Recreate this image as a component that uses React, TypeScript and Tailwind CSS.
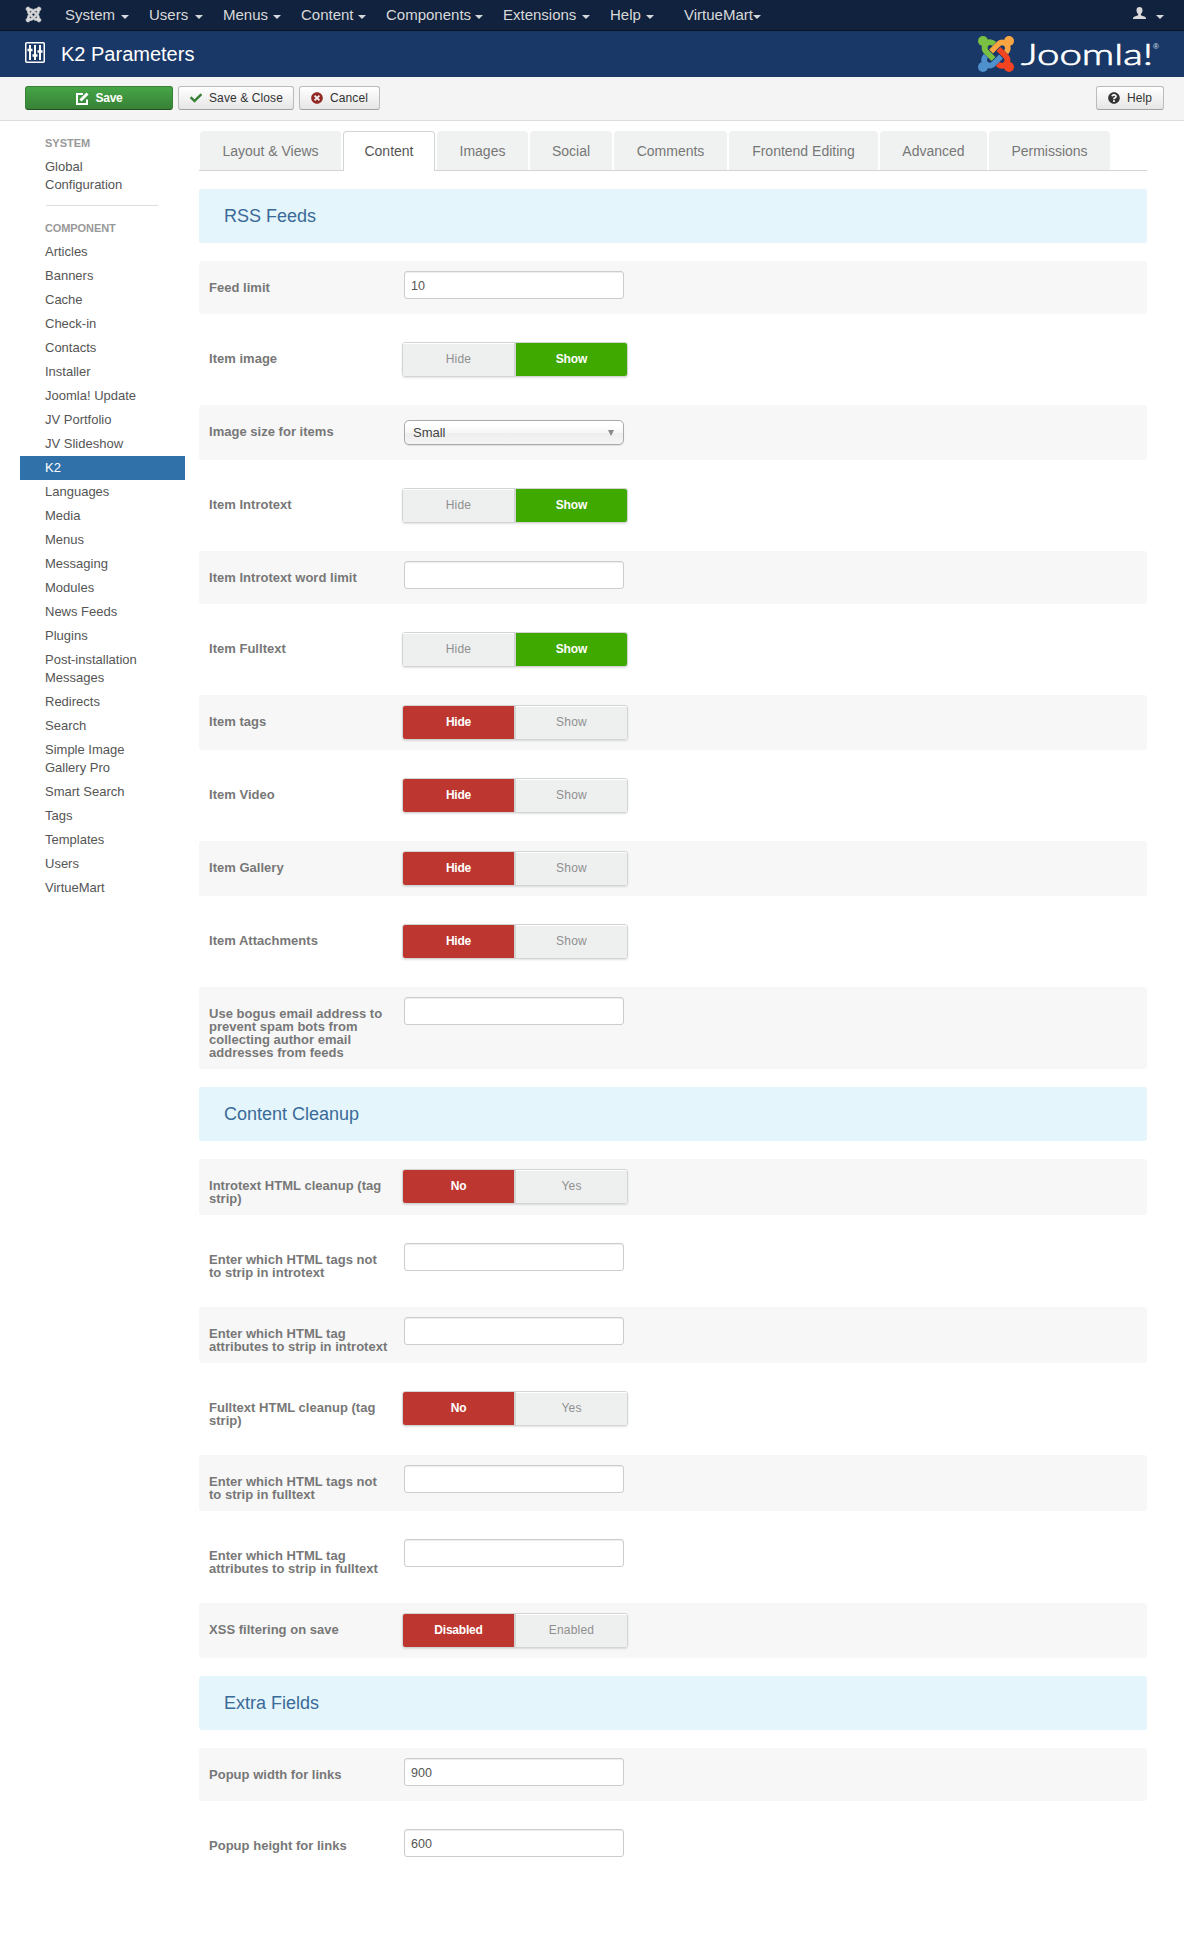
import React from "react";
import { FaJoomla, FaCheck, FaTimesCircle, FaQuestionCircle } from "react-icons/fa";

const navItems: [string, string][] = [
  ["System", "w-16"],
  ["Users", "w-[54px]"],
  ["Menus", "w-[58px]"],
  ["Content", "w-[65px]"],
  ["Components", "w-[97px]"],
  ["Extensions", "w-[87px]"],
  ["Help", "w-[44px]"],
  ["VirtueMart", "w-[77px] ml-[10px]"],
];

const components = [
  "Articles", "Banners", "Cache", "Check-in", "Contacts", "Installer", "Joomla! Update",
  "JV Portfolio", "JV Slideshow", "K2", "Languages", "Media", "Menus", "Messaging", "Modules",
  "News Feeds", "Plugins", "Post-installation Messages", "Redirects", "Search",
  "Simple Image Gallery Pro", "Smart Search", "Tags", "Templates", "Users", "VirtueMart",
];

const tabs: [string, string][] = [
  ["Layout & Views", "w-[141px]"],
  ["Content", "w-[92px]"],
  ["Images", "w-[91px]"],
  ["Social", "w-[82px]"],
  ["Comments", "w-[113px]"],
  ["Frontend Editing", "w-[149px]"],
  ["Advanced", "w-[107px]"],
  ["Permissions", "w-[121px]"],
];

type Field = {
  label: string;
  kind: "text" | "select" | "toggle";
  value?: string;
  options?: [string, string];
  on?: boolean;
};

const hideShow = (label: string, on: boolean): Field => ({ label, kind: "toggle", options: ["Hide", "Show"], on });
const text = (label: string, value = ""): Field => ({ label, kind: "text", value });

const sections: { title: string; fields: Field[] }[] = [
  {
    title: "RSS Feeds",
    fields: [
      text("Feed limit", "10"),
      hideShow("Item image", true),
      { label: "Image size for items", kind: "select", value: "Small" },
      hideShow("Item Introtext", true),
      text("Item Introtext word limit"),
      hideShow("Item Fulltext", true),
      hideShow("Item tags", false),
      hideShow("Item Video", false),
      hideShow("Item Gallery", false),
      hideShow("Item Attachments", false),
      text("Use bogus email address to\nprevent spam bots from\ncollecting author email\naddresses from feeds"),
    ],
  },
  {
    title: "Content Cleanup",
    fields: [
      { label: "Introtext HTML cleanup (tag\nstrip)", kind: "toggle", options: ["No", "Yes"] },
      text("Enter which HTML tags not\nto strip in introtext"),
      text("Enter which HTML tag\nattributes to strip in introtext"),
      { label: "Fulltext HTML cleanup (tag\nstrip)", kind: "toggle", options: ["No", "Yes"] },
      text("Enter which HTML tags not\nto strip in fulltext"),
      text("Enter which HTML tag\nattributes to strip in fulltext"),
      { label: "XSS filtering on save", kind: "toggle", options: ["Disabled", "Enabled"] },
    ],
  },
  {
    title: "Extra Fields",
    fields: [text("Popup width for links", "900"), text("Popup height for links", "600")],
  },
];

function Caret() {
  return <span className="mt-[3px] h-0 w-0 border-x-4 border-t-4 border-x-transparent border-t-[#d5d8dc]" />;
}

function JoomlaLogo() {
  const hook = "M16.500 8 Q12 4.500 8.500 7.500 Q5 11.500 7.500 15";
  const bar = "M7 14 L8 15.500 L15.500 23";
  const arms: [string, number][] = [
    ["#4f91cd", 270],
    ["#f9a541", 90],
    ["#f44321", 180],
    ["#7ac143", 0],
  ];
  return (
    <svg width="176" height="40" viewBox="0 0 176 40" fill="none" className="block overflow-visible">
      {arms.map(([color, angle]) => (
        <g key={color} transform={`rotate(${angle} 18 18)`}>
          <path d={hook} stroke={color} strokeWidth="5.600" />
          <circle cx="5" cy="5" r="5" fill={color} />
        </g>
      ))}
      {arms.map(([color, angle]) => (
        <g key={color} transform={`rotate(${angle} 18 18)`}>
          <path d="M10.500 18 L15.500 23" stroke="#1a3867" strokeOpacity="0.45" strokeWidth="6.600" />
          <path d={bar} stroke={color} strokeWidth="5.400" />
        </g>
      ))}
      <text
        x="43"
        y="28.500"
        fill="#fff"
        fontFamily="Lato"
        fontWeight="300"
        fontSize="30"
        stroke="#fff"
        strokeWidth="0.7"
        textLength="132"
        lengthAdjust="spacingAndGlyphs"
      >
        Joomla!
      </text>
      <text x="175" y="12.500" fill="#dfe5ee" fontFamily="Liberation Sans" fontSize="8">
        ®
      </text>
    </svg>
  );
}

function ToolButton({ className, children }: { className: string; children: React.ReactNode }) {
  return (
    <button
      className={`flex h-6 items-center rounded-[3px] border border-[#bbb] border-b-[#a2a2a2] bg-linear-to-b from-white to-[#e6e6e6] text-[12px] leading-none tracking-[0.1px] text-[#333] ${className}`}
    >
      {children}
    </button>
  );
}

function Toggle({ options, on }: { options: [string, string]; on?: boolean }) {
  const base = "flex h-full items-center justify-center pb-px text-[12px]";
  const idle = "bg-[#eef0ef] text-[#8f8f8f] tracking-[0.2px] shadow-[inset_0_1px_0_#fff]";
  return (
    <div className="-ml-[2px] flex h-[35px] w-[226px] overflow-hidden rounded-[3px] border border-[#d3d5d5] shadow-[0_1px_2px_rgba(0,0,0,0.12)]">
      <div className={`w-[111px] ${base} ${on ? idle : "bg-[#bd362f] font-bold tracking-[-0.2px] text-white"} `}>
        {options[0]}
      </div>
      <div
        className={`w-[113px] border-l-2 border-[#d3d5d5] ${base} ${on ? "bg-[#3fa900] font-bold tracking-[-0.1px] text-white" : idle}`}
      >
        {options[1]}
      </div>
    </div>
  );
}

function Control({ field }: { field: Field }) {
  if (field.kind === "toggle") return <Toggle options={field.options!} on={field.on} />;
  if (field.kind === "select")
    return (
      <div className="mt-[5px] mb-[15px] flex h-[25px] w-[220px] items-center justify-between rounded-[5px] border border-[#aaa] bg-[linear-gradient(#fff_20%,#f6f6f6_50%,#eee_52%,#f4f4f4_100%)] pr-[9px] pl-2 text-[13px] text-[#444] shadow-[0_1px_1px_rgba(0,0,0,0.1)]">
        {field.value}
        <span className="h-0 w-0 border-x-[3.5px] border-t-[6px] border-x-transparent border-t-[#888]" />
      </div>
    );
  return (
    <input
      readOnly
      value={field.value}
      className="mb-[15px] block h-7 w-[220px] rounded-[3px] border border-[#ccc] bg-white px-[6px] pt-px text-[12.5px] text-[#555] shadow-[inset_0_1px_1px_rgba(0,0,0,0.075)] outline-none"
    />
  );
}

export default function App() {
  return (
    <div className="min-h-[1958px] w-[1184px] bg-white font-['Liberation_Sans',Arial,sans-serif] text-[#555]">
      <nav className="flex h-[31px] items-center border-b border-[#0d1522] bg-[#10223e] pr-5 pl-[25px] text-[15px] text-[#d9d9d9]">
        <FaJoomla className="mr-[23px] h-[17px] w-[17px] -translate-y-px stroke-[#d9d9d9] stroke-[20]" />
        <div className="flex gap-5">
          {navItems.map(([name, width]) => (
            <a key={name} className={`flex items-center justify-between leading-[30px] ${width}`}>
              {name}
              <Caret />
            </a>
          ))}
        </div>
        <div className="ml-auto flex items-center gap-[10px]">
          <svg width="13" height="12" viewBox="0 0 13 12" fill="#d9d9d9" className="-translate-y-0.5">
            <path d="M6.500 0C8.400 0 9.500 1.200 9.500 3.200c0 1.600-.7 3-1.600 3.700v1.300l4 1.600c.7.3 1.100.8 1.100 2.200H0c0-1.400.4-1.900 1.100-2.200l4-1.600V6.900C4.200 6.200 3.500 4.800 3.500 3.200 3.500 1.200 4.600 0 6.500 0z" />
          </svg>
          <Caret />
        </div>
      </nav>

      <header className="flex h-[46px] items-start bg-[#1a3867] pl-[25px] text-white">
        <svg width="20" height="21" viewBox="0 0 20 21" fill="none" stroke="#fff" className="mt-[11px]">
          <rect x="0.75" y="0.75" width="18.500" height="19.500" rx="1" strokeWidth="1.500" />
          <path d="M5 3v15M10 3v15M15 3v15" strokeWidth="2" />
          <path d="M2.500 8h5M7.500 13.500h5M12.500 9.500h5" strokeWidth="2.600" />
        </svg>
        <h1 className="mt-2 ml-4 text-[20px] leading-[30px]">K2 Parameters</h1>
        <div className="mt-[5px] mr-[6px] ml-auto w-[200px]">
          <JoomlaLogo />
        </div>
      </header>

      <div className="flex h-11 items-start border-b border-[#ddd] bg-[#f4f4f4] px-[25px] pt-[9px]">
        <button className="mr-[5px] flex h-6 w-[148px] items-center justify-center gap-[7px] rounded-[3px] border border-[#378137] border-b-[#225022] bg-linear-to-b from-[#46a546] to-[#378137] text-[12px] leading-none font-bold tracking-[-0.3px] text-white">
          <svg width="13" height="13" viewBox="0 0 13 13" fill="none" stroke="#fff" strokeWidth="2">
            <path d="M7 2H1v10h10V7.500" />
            <path d="M4.500 8.500 11.500 1.500" strokeWidth="3" />
          </svg>
          Save
        </button>
        <ToolButton className="mr-[5px] w-[116px] pl-[11px]">
          <FaCheck className="mr-[7px] h-3 w-3 text-[#378137]" />
          Save &amp; Close
        </ToolButton>
        <ToolButton className="w-[81px] pl-[11px]">
          <FaTimesCircle className="mr-[7px] h-3 w-3 text-[#942a25]" />
          Cancel
        </ToolButton>
        <ToolButton className="-mr-[5px] ml-auto w-[68px] pl-[11px]">
          <FaQuestionCircle className="mr-[7px] h-3 w-3" />
          Help
        </ToolButton>
      </div>

      <div className="flex">
        <aside className="ml-5 w-[165px] shrink-0 pt-[13px] text-[13px] leading-[18px]">
          <h2 className="pl-[25px] text-[11px] font-bold text-[#999]">SYSTEM</h2>
          <a className="block px-[25px] pt-[6px]">Global Configuration</a>
          <hr className="mt-[11px] mr-[27px] ml-[26px] border-[#ddd]" />
          <h2 className="mt-[13px] mb-[3px] pl-[25px] text-[11px] font-bold tracking-[-0.1px] text-[#999]">COMPONENT</h2>
          <ul>
            {components.map((c) => (
              <li key={c} className={`px-[25px] py-[3px] ${c === "K2" ? "bg-[#3071a9] text-white" : ""}`}>
                {c}
              </li>
            ))}
          </ul>
        </aside>

        <main className="ml-[14px] w-[948px] pt-[10px]">
          <div className="flex h-10 gap-[2px] border-b border-[#d3d5d5] pl-px text-[14px]">
            {tabs.map(([name, width]) => (
              <div
                key={name}
                className={`flex items-center justify-center rounded-t-[4px] pt-px ${width} ${
                  name === "Content"
                    ? "-mb-px border border-b-0 border-[#d3d5d5] bg-white pb-px text-[#555]"
                    : "bg-[#f0f2f1] text-[#777]"
                }`}
              >
                {name}
              </div>
            ))}
          </div>
          <div className="mt-[18px] flex flex-col gap-[18px]">
            {sections.map((s) => (
              <React.Fragment key={s.title}>
                <h3 className="h-[54px] rounded-[3px] bg-[#e4f5fc] pl-[25px] text-[18px] leading-[55px] text-[#3a6a98]">
                  {s.title}
                </h3>
                {s.fields.map((f, i) => (
                  <div key={f.label} className={`flex rounded-[3px] ${i % 2 === 0 ? "bg-[#f7f7f7]" : ""}`}>
                    <label className="w-[205px] pt-5 pb-[10px] pl-[10px] text-[13px] leading-[13px] font-bold tracking-[0.02px] whitespace-pre text-[#777]">
                      {f.label}
                    </label>
                    <div className="py-[10px] [&:has(input)]:pb-0 [&:has(span)]:pb-0">
                      <Control field={f} />
                    </div>
                  </div>
                ))}
              </React.Fragment>
            ))}
          </div>
        </main>
      </div>
    </div>
  );
}
